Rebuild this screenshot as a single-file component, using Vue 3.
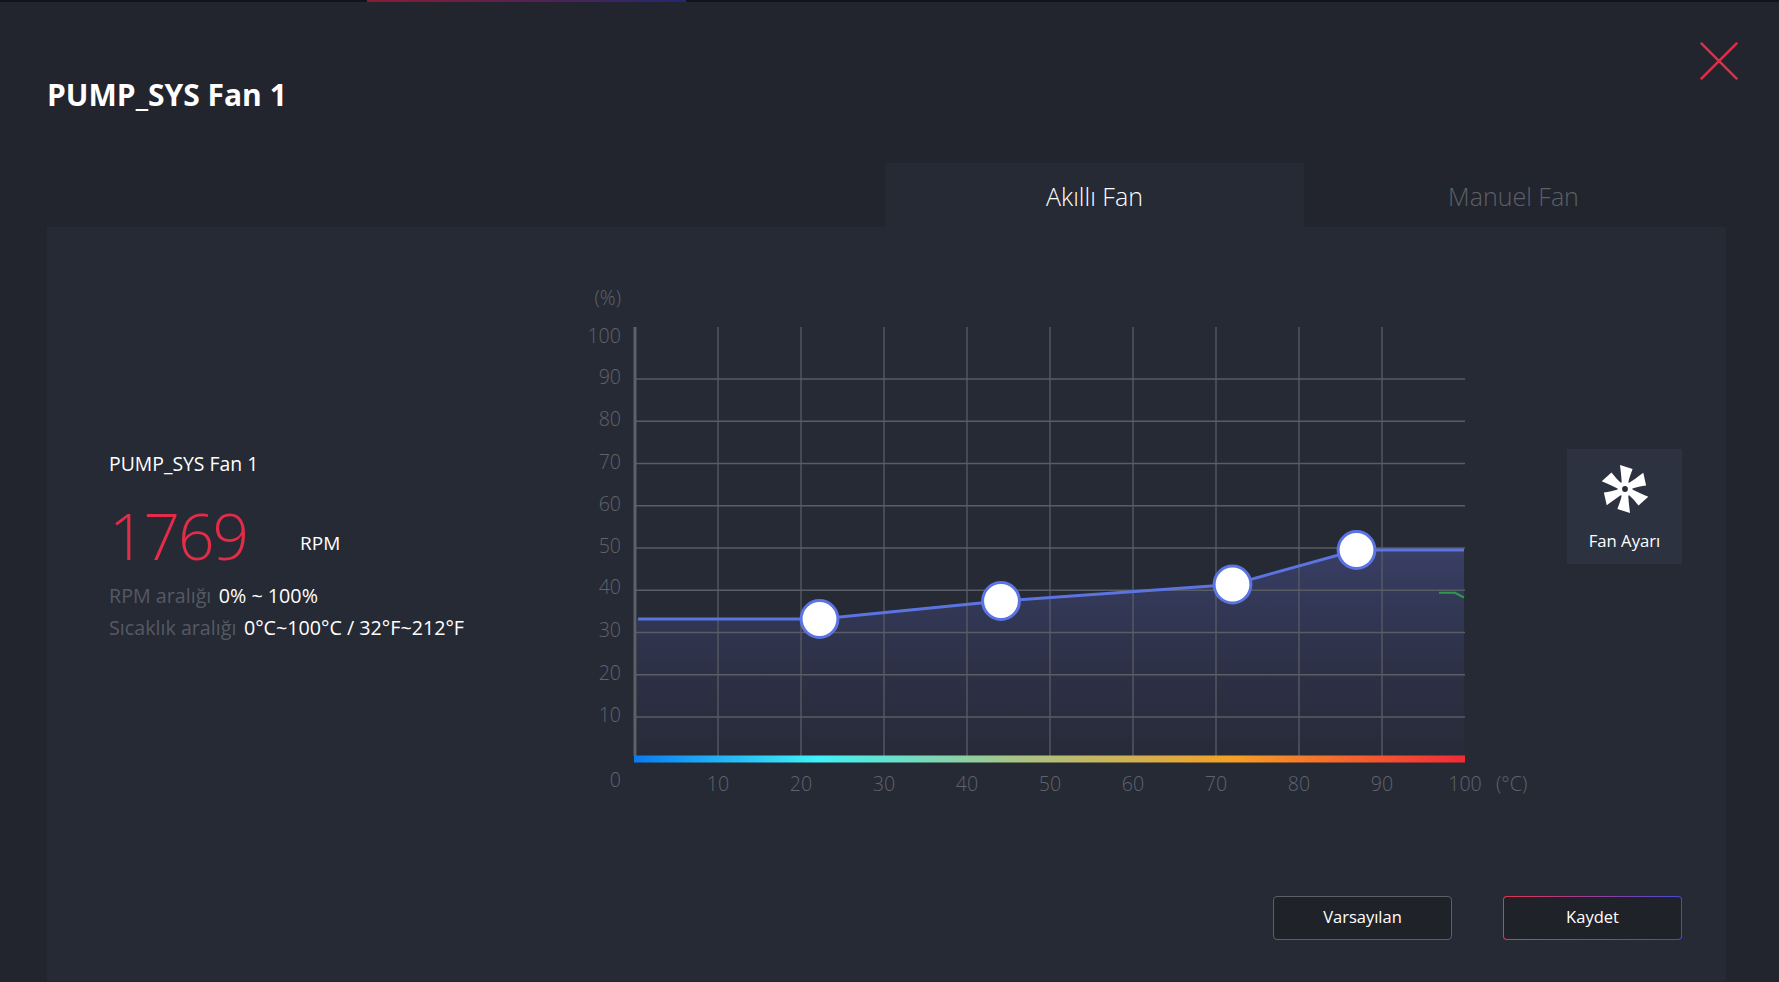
<script setup>
const yLabels = [
  { t: '100', y: 343 }, { t: '90', y: 384 }, { t: '80', y: 426 }, { t: '70', y: 469 },
  { t: '60', y: 511 }, { t: '50', y: 553 }, { t: '40', y: 594 }, { t: '30', y: 637 },
  { t: '20', y: 680 }, { t: '10', y: 722 }, { t: '0', y: 787 }
]
const xTicks = [10, 20, 30, 40, 50, 60, 70, 80, 90, 100].map(v => ({ t: v, x: 635 + v * 8.3 }))
const vLines = xTicks.slice(0, 9)
const hLines = [0, 1, 2, 3, 4, 5, 6, 7, 8].map(i => 379 + i * 42.25)
const nodes = [
  { x: 819.5, y: 619 }, { x: 1001, y: 601 }, { x: 1232.5, y: 584.5 }, { x: 1356.5, y: 550 }
]
const linePts = '638,619 ' + nodes.map(n => `${n.x},${n.y}`).join(' ') + ' 1464,550'
const areaPts = '637,619 ' + nodes.map(n => `${n.x},${n.y}`).join(' ') + ' 1464,550 1464,755 637,755'
const blades = [0, 60, 120, 180, 240, 300]
</script>

<template>
  <div class="page">
    <div class="strip"><div class="strip-accent"></div></div>
    <header class="head">
      <h1 class="title">PUMP_SYS Fan 1</h1>
      <svg class="close" viewBox="0 0 38 38" width="38" height="38">
        <path d="M0.8 0.8 L37.2 37.2 M37.2 0.8 L0.8 37.2" stroke="#dc3049" stroke-width="2.5" fill="none" />
      </svg>
    </header>
    <nav class="tabs">
      <div class="tab active">Akıllı Fan</div>
      <div class="tab">Manuel Fan</div>
    </nav>
    <main class="panel">
      <div class="body">
        <section class="info">
          <div class="name">PUMP_SYS Fan 1</div>
          <div class="speed"><span class="rpm">1769</span><span class="unit">RPM</span></div>
          <div class="row"><span class="muted">RPM aralığı</span><span>0% ~ 100%</span></div>
          <div class="row"><span class="muted">Sıcaklık aralığı</span><span>0°C~100°C / 32°F~212°F</span></div>
        </section>
        <svg class="chart" viewBox="580 280 960 520" width="960" height="520">
          <defs>
            <linearGradient id="heat" x1="0" x2="1" y1="0" y2="0">
              <stop offset="0" stop-color="#0a7bf2" />
              <stop offset="0.22" stop-color="#3ff2f7" />
              <stop offset="0.45" stop-color="#a5c58a" />
              <stop offset="0.72" stop-color="#f5a025" />
              <stop offset="1" stop-color="#f22a36" />
            </linearGradient>
            <linearGradient id="area" x1="0" x2="0" y1="0" y2="1">
              <stop offset="0" stop-color="#3a4068" stop-opacity="0.95" />
              <stop offset="1" stop-color="#303453" stop-opacity="0.12" />
            </linearGradient>
          </defs>
          <polygon :points="areaPts" fill="url(#area)" />
          <line v-for="v in vLines" :key="v.t" :x1="v.x" :x2="v.x" y1="327" y2="756" class="grid" />
          <line v-for="h in hLines" :key="h" x1="636" x2="1465" :y1="h" :y2="h" class="grid" />
          <line x1="635" x2="635" y1="327" y2="756" class="axis" />
          <rect x="634" y="755.5" width="831" height="7" fill="url(#heat)" />
          <polyline points="1439,592.8 1455,592.8 1464,597.5" fill="none" stroke="#2f9a4d" stroke-width="2" />
          <polyline :points="linePts" fill="none" stroke="#5b74e2" stroke-width="3" />
          <circle v-for="n in nodes" :key="n.x" :cx="n.x" :cy="n.y" r="18.4" fill="#fff" stroke="#5b74e2" stroke-width="3" />
          <text x="621" y="305" text-anchor="end" class="lab">(%)</text>
          <text v-for="l in yLabels" :key="l.t" x="621" :y="l.y" text-anchor="end" class="lab">{{ l.t }}</text>
          <text v-for="v in xTicks" :key="v.t" :x="v.x" y="791" text-anchor="middle" class="lab">{{ v.t }}</text>
          <text x="1496" y="791" class="lab">(°C)</text>
        </svg>
        <div class="fan-btn">
          <svg viewBox="-25 -25 50 50" width="50" height="50">
            <path v-for="b in blades" :key="b" :transform="`rotate(${b})`"
              d="M-5 -24 L7.6 -20 C6 -15.5 4 -11 3 -5 L-3.2 -5 C-3.4 -11 -4.2 -17 -5 -24 Z" fill="#fff" />
            <circle r="7.4" fill="#fff" />
            <circle r="2.9" fill="#282d3a" />
          </svg>
          <span>Fan Ayarı</span>
        </div>
      </div>
      <footer class="foot">
        <button class="btn">Varsayılan</button>
        <button class="btn save">Kaydet</button>
      </footer>
    </main>
  </div>
</template>

<style>
html, body { margin: 0; background: #22252d; }
</style>

<style scoped>
.page {
  width: 1779px;
  height: 982px;
  display: flex;
  flex-direction: column;
  overflow: hidden;
  background: #22252d;
  color: #fff;
  font-family: "Open Sans", "Noto Sans", sans-serif;
}
.strip {
  height: 2px;
  flex: none;
  background: #12141c;
  padding-left: 367px;
}
.strip-accent {
  width: 319px;
  height: 2px;
  background: linear-gradient(90deg, #8a1c34, #252770);
}
.head {
  height: 161px;
  flex: none;
  display: flex;
  justify-content: space-between;
  align-items: flex-start;
  padding: 0 41px 0 47px;
}
.title {
  margin: 71px 0 0;
  font-size: 30px;
  line-height: 44px;
  font-weight: 700;
}
.close { margin-top: 40px; }
.tabs {
  height: 64px;
  flex: none;
  display: flex;
  padding-left: 885px;
}
.tab {
  width: 419px;
  text-align: center;
  font-size: 25px;
  font-weight: 300;
  line-height: 66px;
  color: #5c606a;
}
.tab.active {
  background: #262a35;
  color: #fff;
}
.panel {
  flex: 1;
  margin: 0 53px 1px 47px;
  background: #262a35;
  display: flex;
  flex-direction: column;
}
.body {
  display: flex;
  height: 669px;
  padding-left: 62px;
}
.info {
  width: 471px;
  flex: none;
  padding-top: 224px;
  font-size: 19.7px;
}
.name { line-height: 26px; font-size: 19.4px; }
.speed {
  display: flex;
  align-items: flex-start;
  height: 82.5px;
  margin-top: 20.5px;
}
.rpm {
  width: 191px;
  font-size: 64px;
  line-height: 76px;
  font-weight: 350;
  color: #e32c48;
  letter-spacing: -2px;
}
.unit {
  font-size: 19px;
  line-height: 26px;
  margin-top: 32px;
}
.row {
  display: flex;
  gap: 7.5px;
  line-height: 32px;
}
.muted { color: #555964; }
.chart {
  flex: none;
  margin-top: 53px;
  margin-right: 27px;
}
.grid { stroke: #5a5d66; stroke-width: 1.3; }
.axis { stroke: #5d6068; stroke-width: 3; }
.lab {
  font-size: 19.6px;
  font-weight: 300;
  fill: #5f636d;
}
.fan-btn {
  width: 115px;
  height: 115px;
  flex: none;
  margin-top: 222px;
  background: #2d3240;
  display: flex;
  flex-direction: column;
  align-items: center;
  font-size: 16.7px;
}
.fan-btn svg { margin-top: 15px; }
.fan-btn span { margin-top: 15px; line-height: 24px; }
.foot {
  display: flex;
  justify-content: flex-end;
  gap: 51px;
  padding-right: 44px;
}
.btn {
  width: 179px;
  height: 44px;
  box-sizing: border-box;
  border-radius: 4px;
  border: 1.5px solid #5c5f69;
  background: #202229;
  color: #fff;
  font-family: inherit;
  font-size: 16.5px;
  padding: 0 0 3px;
}
.btn.save {
  border-color: transparent;
  background:
    linear-gradient(#202229, #202229) padding-box,
    linear-gradient(90deg, #e8344f, #454ad6) border-box;
}
</style>
